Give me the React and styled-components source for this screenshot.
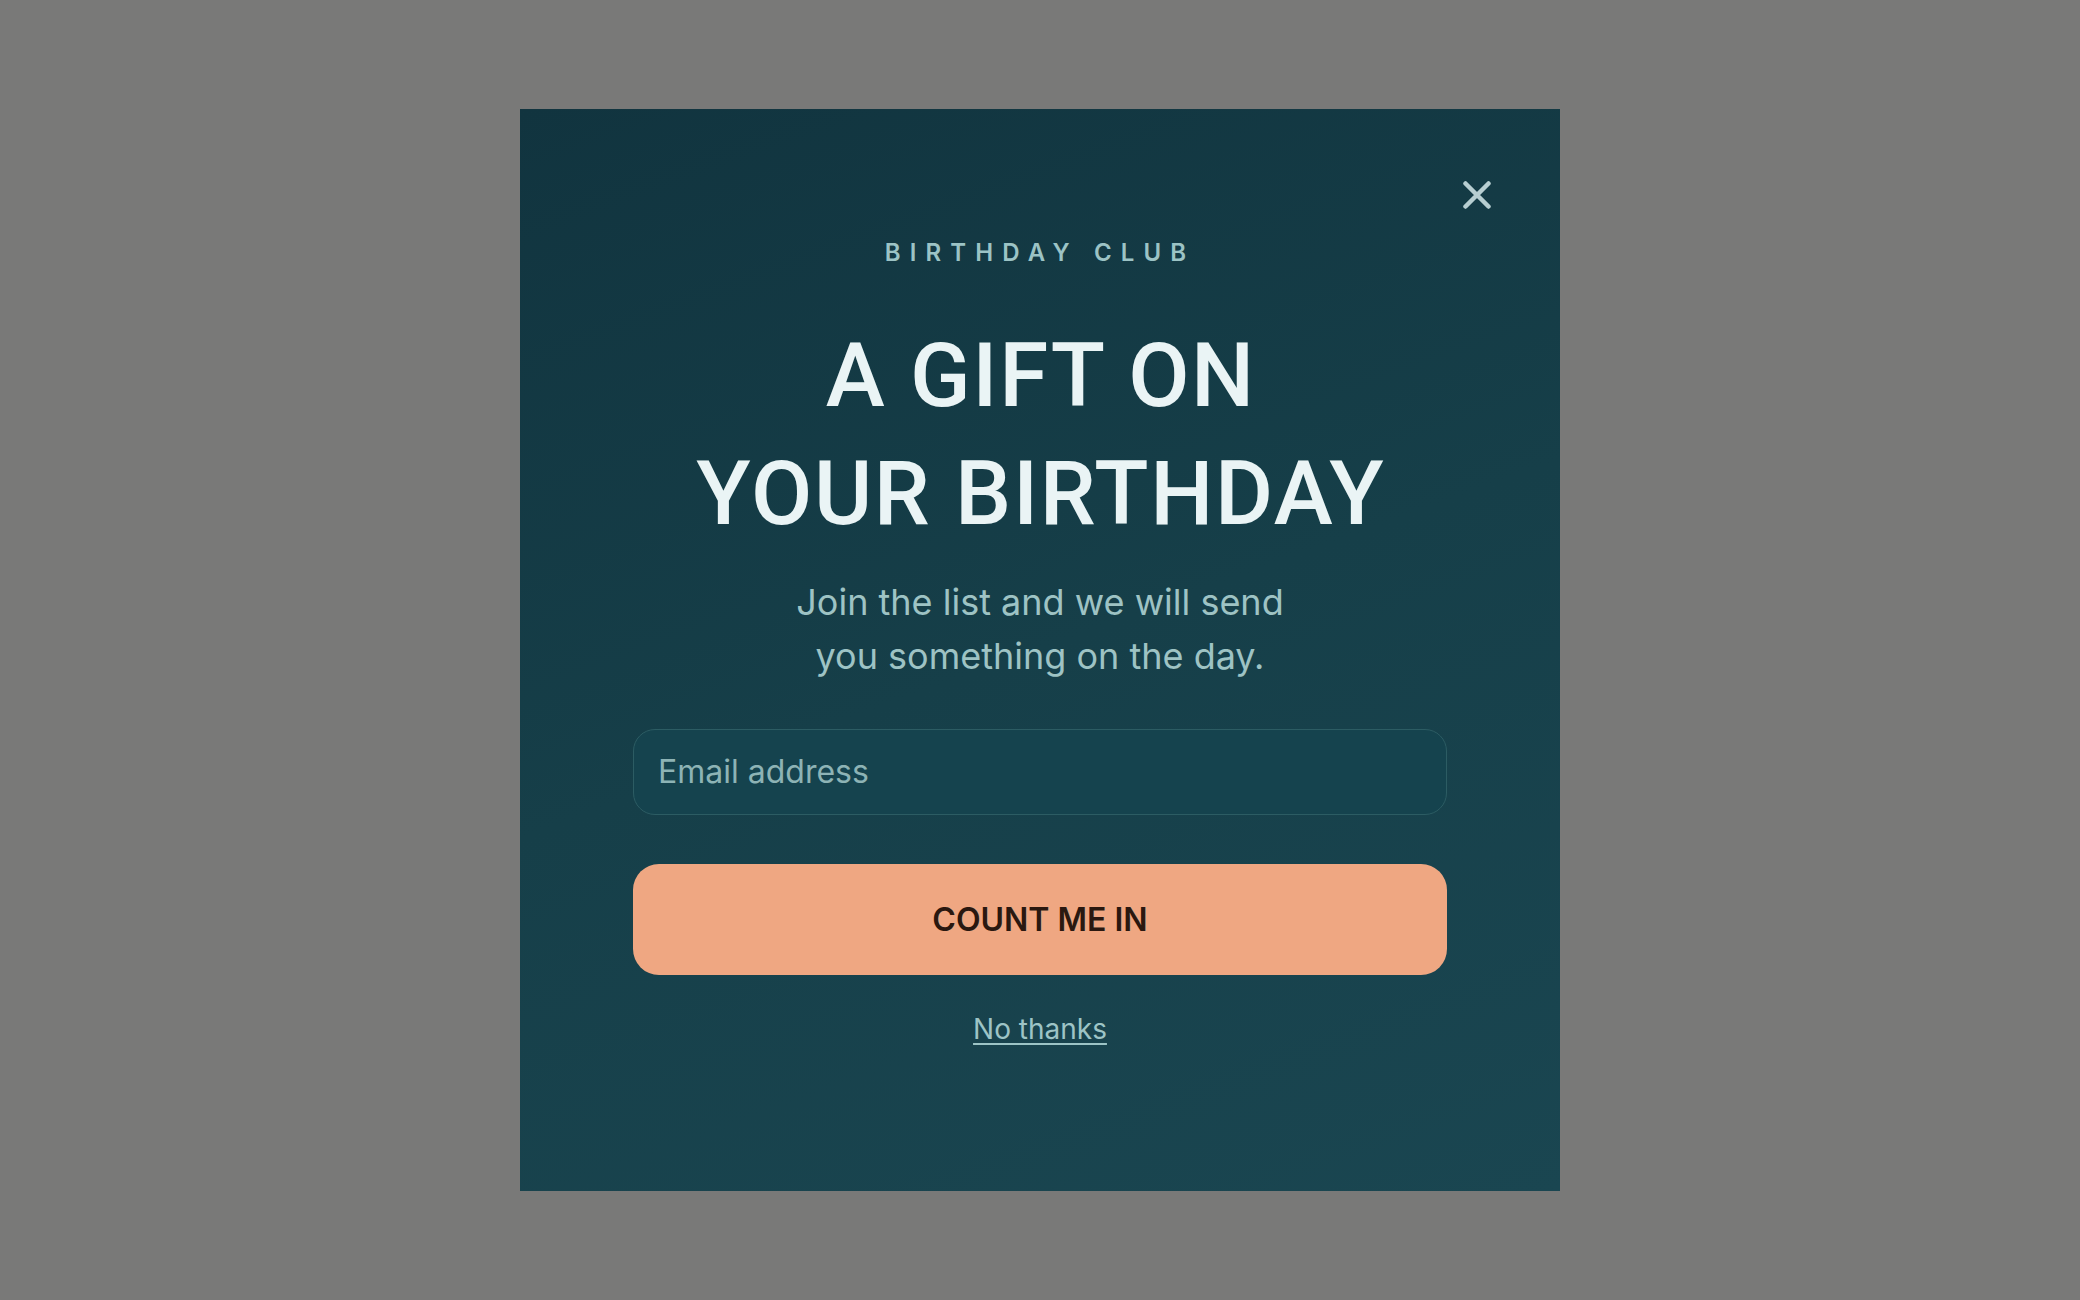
import React from 'react'
import styled, { createGlobalStyle } from 'styled-components'

const GlobalStyle = createGlobalStyle`
    * { box-sizing: border-box; }
    html, body {
        margin: 0;
        padding: 0;
        background: #797978;
        font-family: 'Inter', 'Noto Sans', sans-serif;
    }
`

const Backdrop = styled.div`
    min-height: 100vh;
    display: flex;
    align-items: center;
    justify-content: center;
`

const Modal = styled.section`
    position: relative;
    width: 1040px;
    height: 1082px;
    padding: 130px 113px 0;
    display: flex;
    flex-direction: column;
    align-items: center;
    background: linear-gradient(160deg, #11343f 0%, #163f49 50%, #1a4651 100%);
`

const CloseBtn = styled.button`
    position: absolute;
    top: 72px;
    right: 69px;
    width: 28px;
    height: 28px;
    padding: 0;
    border: none;
    background: transparent;
    cursor: pointer;
    display: flex;

    svg { display: block; }
`

const Eyebrow = styled.p`
    margin: 0 0 49px;
    font-size: 24px;
    line-height: 1.2;
    font-weight: 600;
    letter-spacing: 0.38em;
    color: #9cc3c5;
    text-transform: uppercase;
`

const Title = styled.h1`
    margin: 0 0 22px;
    padding-left: 1.6px;
    font-family: 'Roboto', 'Liberation Sans', sans-serif;
    font-weight: 500;
    font-size: 89px;
    line-height: 118px;
    letter-spacing: 1.6px;
    color: #eaf4f5;
    text-align: center;
    text-transform: uppercase;
`

const Lead = styled.p`
    margin: 0 0 46px;
    font-size: 36px;
    line-height: 54px;
    color: #9ec3c4;
    text-align: center;
`

const Form = styled.form`
    width: 814px;
    display: flex;
    flex-direction: column;
    align-items: center;
`

const EmailInput = styled.input`
    width: 100%;
    height: 86px;
    padding: 0 24px;
    margin: 0 0 49px;
    border: 1.5px solid #2c5c63;
    border-radius: 22px;
    background: #15434e;
    font-family: 'Inter', sans-serif;
    font-size: 32px;
    color: #eaf4f5;
    outline: none;

    &::placeholder { color: #8db3b5; }
`

const SubmitBtn = styled.button`
    width: 100%;
    height: 111px;
    border: none;
    border-radius: 26px;
    background: #efa782;
    font-family: 'Inter', sans-serif;
    font-size: 32px;
    font-weight: 600;
    color: #2a1810;
    text-transform: uppercase;
    cursor: pointer;
`

const Dismiss = styled.a`
    margin-top: 33px;
    font-size: 28px;
    line-height: 1.5;
    color: #9dc4c6;
    text-decoration: underline;
    text-underline-offset: 4px;
    text-decoration-thickness: 2px;
    cursor: pointer;
`

const App = () => {
    return (
        <>
            <GlobalStyle />
            <Backdrop>
                <Modal>
                    <CloseBtn aria-label="Close">
                        <svg width="28" height="28" viewBox="0 0 28 28">
                            <path d="M2.5 2.5 L25.5 25.5 M25.5 2.5 L2.5 25.5" stroke="#b7ced1" strokeWidth="4.5" strokeLinecap="round" />
                        </svg>
                    </CloseBtn>

                    <Eyebrow>Birthday Club</Eyebrow>
                    <Title>A gift on<br />your birthday</Title>
                    <Lead>Join the list and we will send<br />you something on the day.</Lead>

                    <Form onSubmit={e => e.preventDefault()}>
                        <EmailInput type="email" placeholder="Email address" />
                        <SubmitBtn type="submit">Count me in</SubmitBtn>
                        <Dismiss>No thanks</Dismiss>
                    </Form>
                </Modal>
            </Backdrop>
        </>
    )
}

export default App
